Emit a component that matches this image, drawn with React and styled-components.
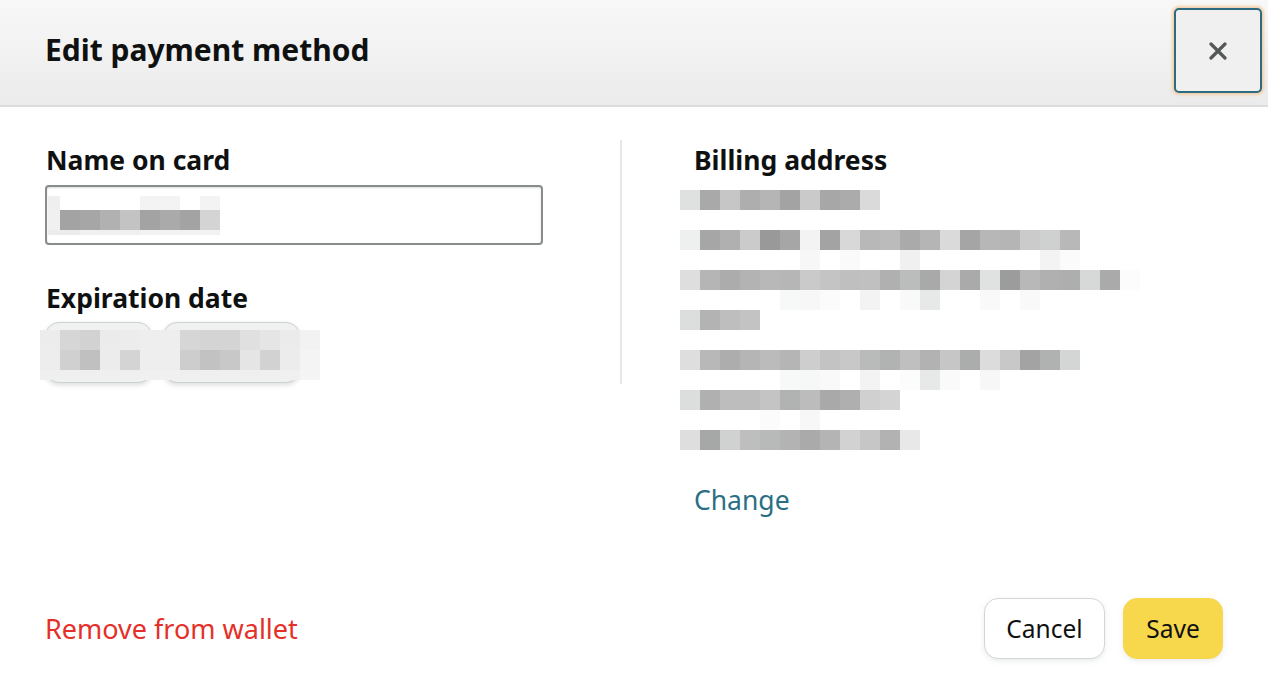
import styled, { createGlobalStyle } from "styled-components";

const GlobalStyle = createGlobalStyle`
  html, body {
    margin: 0;
    padding: 0;
    background: #ffffff;
  }
  body {
    font-family: "Noto Sans", "Open Sans", Arial, sans-serif;
    color: #0f1111;
  }
`;

// blurred personal data, one row per entry: [height, colours]
const NAME_ROWS = [
  [14, ["#efefef", "#fff", "#fff", "#fff", "#fff", "#f3f3f3", "#f3f3f3", "#fff", "#f3f3f3"]],
  [20, ["#f0f0f0", "#a3a3a3", "#a6a6a6", "#b1b1b1", "#c3c3c3", "#a3a3a3", "#aaaaaa", "#a3a3a3", "#d4d4d4"]],
  [5, ["#ececec", "#ececec", "#f0f0f0", "#f0f0f0", "#f0f0f0", "#f2f2f2", "#f2f2f2", "#f2f2f2", "#f2f2f2"]],
];

const DATE_ROWS = [
  [20, ["#ececec", "#d6d6d6", "#d2d2d2", "#ebebeb", "#ececec", "#eeeeee", "#eeeeee", "#d6d6d6", "#d4d4d4", "#d4d4d4", "#e0e0e0", "#e5e5e5", "#ebebeb", "#f2f2f2"]],
  [20, ["#ededed", "#d0d0d0", "#c0c0c0", "#ececec", "#d4d4d4", "#eeeeee", "#eeeeee", "#cdcdcd", "#c2c2c2", "#c8c8c8", "#e5e5e5", "#d2d2d2", "#ececec", "#f4f4f4"]],
  [10, ["#efefef", "#efefef", "#efefef", "#efefef", "#efefef", "#f0f0f0", "#f0f0f0", "#efefef", "#efefef", "#efefef", "#efefef", "#efefef", "#f0f0f0", "#f5f5f5"]],
];

const faint = (cells) => {
  const row = Array(23).fill(null);
  Object.entries(cells).forEach(([i, c]) => (row[i] = c));
  return [20, row];
};

const ADDRESS_ROWS = [
  [20, ["#dfe0e0", "#a9a9a9", "#c6c6c6", "#aeaeae", "#b5b5b5", "#a3a3a3", "#cacaca", "#a7a7a7", "#ababab", "#dadada"]],
  [20, []],
  [20, ["#eeefef", "#a6a6a6", "#b0b0b0", "#cbcbcb", "#999999", "#a6a6a6", "#f3f3f3", "#a3a3a3", "#d8d8d8", "#b8b8b8", "#bbbbbb", "#aaaaaa", "#b5b5b5", "#dadada", "#a5a5a5", "#b7b7b7", "#b5b5b5", "#cbcbcb", "#cfd1d1", "#b8b8b8"]],
  faint({ 6: "#f7f7f7", 8: "#fafafa", 11: "#f0f0f0", 18: "#f3f3f3", 19: "#fbfbfb" }),
  [20, ["#dedede", "#b5b5b5", "#acacac", "#b3b3b3", "#b8b8b8", "#b6b6b6", "#cacaca", "#c4c4c4", "#bfbfbf", "#c0c0c0", "#b0b0b0", "#bbbdbd", "#a9a9a9", "#d4d4d4", "#aaaaaa", "#e0e2e2", "#9c9c9c", "#b8b8b8", "#b0b0b0", "#aeaeae", "#d7d9d9", "#aaaaaa", "#fcfcfc"]],
  faint({ 5: "#f7f8f8", 6: "#f7f7f7", 7: "#fbfbfb", 9: "#f3f3f3", 11: "#f9f9f9", 12: "#e7e8e8", 15: "#f9f9f9", 17: "#f9f9f9" }),
  [20, ["#dcdede", "#b3b3b3", "#bebebe", "#c3c3c3"]],
  [20, []],
  [20, ["#dedede", "#b8b8b8", "#adadad", "#b5b5b5", "#bbbbbb", "#b5b5b5", "#cecece", "#c3c3c3", "#c8c8c8", "#b9bbbb", "#b1b3b3", "#bfbfbf", "#b2b2b2", "#c6c6c6", "#abadad", "#dcdcdc", "#c8c8c8", "#a3a3a3", "#b0b2b2", "#d4d6d6"]],
  faint({ 5: "#f7f8f8", 6: "#f6f7f7", 7: "#f9f9f9", 9: "#f3f3f3", 11: "#fcfcfc", 12: "#e7e8e8", 13: "#fafafa", 15: "#f7f7f7" }),
  [20, ["#dcdede", "#b0b0b0", "#bdbdbd", "#bdbdbd", "#c4c4c4", "#b1b3b3", "#bcbcbc", "#a9a9a9", "#afafaf", "#d0d0d0", "#d4d4d4"]],
  faint({ 4: "#fbfbfb", 6: "#f7f7f7" }),
  [20, ["#dedede", "#a6a8a8", "#d0d2d2", "#bebebe", "#b8baba", "#b3b3b3", "#aaaaaa", "#b4b4b4", "#d2d2d2", "#c6c6c6", "#b2b2b2", "#e8e8e8"]],
];

const Modal = styled.div`
  width: 1268px;
  height: 690px;
  display: flex;
  flex-direction: column;
  background: #ffffff;
  overflow: hidden;
`;

const Header = styled.header`
  height: 105px;
  display: flex;
  justify-content: space-between;
  align-items: flex-start;
  padding: 0 6px 0 45px;
  background: linear-gradient(to bottom, #f8f8f8, #ebebeb);
  border-bottom: 2px solid #dcdcdc;
`;

const Title = styled.h1`
  margin: 0;
  font-size: 30px;
  line-height: 100px;
  font-weight: 700;
  color: #0f1111;
`;

const CloseButton = styled.button`
  margin-top: 8px;
  width: 88px;
  height: 85px;
  display: flex;
  align-items: center;
  justify-content: center;
  padding: 0;
  background: #f0f0f0;
  border: 2px solid #2c6b80;
  border-radius: 5px;
  box-shadow: 0 0 3px 2px #f2cfa8;
  cursor: pointer;
`;

const Body = styled.main`
  display: flex;
  align-items: flex-start;
  padding: 33px 0 0 46px;
`;

const LeftColumn = styled.section`
  width: 574px;
  padding-bottom: 1px;
  border-right: 2px solid #e7e7e7;
`;

const RightColumn = styled.section`
  padding-left: 72px;
`;

const Label = styled.div`
  margin-top: ${(p) => p.$top || 4}px;
  font-size: 26.5px;
  line-height: 32px;
  font-weight: 700;
  color: #0f1111;
`;

const Input = styled.div`
  margin-top: 9px;
  margin-left: -1px;
  width: 498px;
  height: 60px;
  box-sizing: border-box;
  padding: 9px 0 0 1px;
  border: 2px solid #888c8c;
  border-radius: 4px;
  box-shadow: inset 0 1px 2px rgba(15, 17, 17, 0.15);
  overflow: hidden;
`;

const Grid = styled.div`
  display: flex;
  flex-direction: column;
  margin: ${(p) => p.$margin || "0"};
`;

const GridRow = styled.div`
  display: flex;
  height: ${(p) => p.$h}px;
`;

const Cell = styled.div`
  flex: none;
  width: 20px;
  height: 100%;
  &:first-child {
    width: ${(p) => p.$first || 20}px;
  }
`;

const PixelGrid = ({ rows, first, margin }) => (
  <Grid $margin={margin}>
    {rows.map(([h, cells], i) => (
      <GridRow key={i} $h={h}>
        {cells.map((c, j) => (
          <Cell key={j} $first={first} style={{ background: c || "transparent" }} />
        ))}
      </GridRow>
    ))}
  </Grid>
);

const Selects = styled.div`
  position: relative;
  margin-top: 8px;
  margin-left: -1px;
  display: flex;
  gap: 11px;
`;

const Select = styled.div`
  width: ${(p) => p.$w}px;
  height: 61px;
  box-sizing: border-box;
  background: #f0f2f2;
  border: 1px solid #cdd1d1;
  border-radius: 14px;
  box-shadow: 0 2px 5px rgba(15, 17, 17, 0.15);
`;

const SelectBlur = styled.div`
  position: absolute;
  left: -5px;
  top: 8px;
`;

const Link = styled.a`
  display: block;
  margin-top: 34px;
  font-size: 26.5px;
  line-height: 32px;
  color: #2b6f84;
  text-decoration: none;
  cursor: pointer;
`;

const Footer = styled.footer`
  margin-top: auto;
  display: flex;
  align-items: center;
  justify-content: space-between;
  padding: 0 45px 31px 45px;
`;

const DangerLink = styled.a`
  font-size: 27px;
  line-height: 32px;
  color: #e3312a;
  cursor: pointer;
`;

const Actions = styled.div`
  display: flex;
  gap: 18px;
`;

const Button = styled.button`
  width: ${(p) => p.$w}px;
  height: 61px;
  box-sizing: border-box;
  font-family: inherit;
  font-size: 24.5px;
  color: #0f1111;
  background: ${(p) => (p.$primary ? "#f7d74c" : "#ffffff")};
  border: 1px solid ${(p) => (p.$primary ? "#f7d74c" : "#d2d6d6")};
  border-radius: 14px;
  box-shadow: 0 2px 5px rgba(213, 217, 217, 0.5);
  cursor: pointer;
`;

const CloseIcon = () => (
  <svg width="18" height="18" viewBox="0 0 18 18">
    <path d="M2 2 L16 16 M16 2 L2 16" stroke="#555858" strokeWidth="3.2" strokeLinecap="round" />
  </svg>
);

const App = () => {
  return (
    <>
      <GlobalStyle />
      <Modal>
        <Header>
          <Title>Edit payment method</Title>
          <CloseButton aria-label="Close">
            <CloseIcon />
          </CloseButton>
        </Header>
        <Body>
          <LeftColumn>
            <Label>Name on card</Label>
            <Input>
              <PixelGrid rows={NAME_ROWS} first={12} />
            </Input>
            <Label $top={37}>Expiration date</Label>
            <Selects>
              <Select $w={107} />
              <Select $w={137} />
              <SelectBlur>
                <PixelGrid rows={DATE_ROWS} />
              </SelectBlur>
            </Selects>
          </LeftColumn>
          <RightColumn>
            <Label>Billing address</Label>
            <PixelGrid rows={ADDRESS_ROWS} margin="14px 0 0 -14px" />
            <Link>Change</Link>
          </RightColumn>
        </Body>
        <Footer>
          <DangerLink>Remove from wallet</DangerLink>
          <Actions>
            <Button $w={121}>Cancel</Button>
            <Button $w={100} $primary>
              Save
            </Button>
          </Actions>
        </Footer>
      </Modal>
    </>
  );
};

export default App;
